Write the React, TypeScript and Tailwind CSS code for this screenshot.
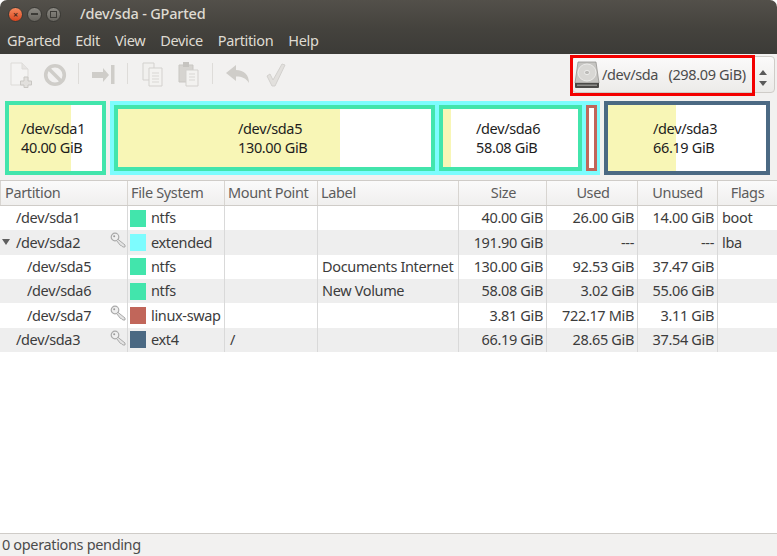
import React from "react";

const font = { };
const GREEN = "bg-[#42e5ac]";

function Key() {
  return (
    <svg width="17" height="17" viewBox="0 0 17 17" className="shrink-0">
      <circle cx="5" cy="5" r="3.8" fill="#efefef" stroke="#a9a9a9" strokeWidth="1.2" />
      <circle cx="4.2" cy="4.2" r="1" fill="#9a9a9a" />
      <path d="M7.8 7.2 L15 13 L15 15 L12.8 15 L11.5 13.6 L10.4 13.4 L6.6 8.6 Z" fill="#e4e4e4" stroke="#a9a9a9" strokeWidth="1" />
    </svg>
  );
}

function Toolbar() {
  const c = "#cfcdc9";
  return (
    <div className="h-[47px] bg-[#f2f1f0] flex items-start pl-[10px] relative">
      <svg width="22" height="26" viewBox="0 0 22 26" className="mt-[8px]">
        <path d="M1 1 H12 L18 7 V23 H1 Z" fill="#f4f3f2" stroke="#dddbd8" />
        <path d="M12 1 V7 H18" fill="#e6e4e2" stroke="#dddbd8" />
        <path d="M14 15 H18 V19 H21.5 V23 H18 V25.5 H14 V23 H10.5 V19 H14 Z" fill="#e2e0dd" stroke="#c9c7c3" />
      </svg>
      <svg width="24" height="24" viewBox="0 0 24 24" className="ml-[11px] mt-[9px]">
        <circle cx="12" cy="12" r="9.3" fill="none" stroke={c} strokeWidth="3.6" />
        <path d="M5.5 5.5 L18.5 18.5" stroke={c} strokeWidth="3.6" />
      </svg>
      <div className="w-px h-[21px] bg-[#dedcd9] ml-[11px] mt-[9px]" />
      <svg width="24" height="22" viewBox="0 0 24 22" className="ml-[13px] mt-[10px]">
        <path d="M0 8 H11 V4 L17 11 L11 18 V14 H0 Z" fill={c} />
        <path d="M19 1 H22.5 V20 H19 Z" fill={c} />
      </svg>
      <div className="w-px h-[21px] bg-[#dedcd9] ml-[11px] mt-[9px]" />
      <svg width="22" height="25" viewBox="0 0 22 25" className="ml-[14px] mt-[8px]">
        <path d="M1 1 H12 V18 H1 Z" fill="#f1f0ee" stroke="#d3d1ce" />
        <path d="M7 6 H20 V24 H7 Z" fill="#f3f2f0" stroke="#d3d1ce" />
        <path d="M10 11 H17 M10 14 H17 M10 17 H17 M10 20 H17" stroke="#d9d7d4" />
      </svg>
      <svg width="22" height="26" viewBox="0 0 22 26" className="ml-[14px] mt-[7px]">
        <path d="M1 4 H15 V21 H1 Z" fill="#d6d4d0" stroke="#c9c7c3" />
        <path d="M5 1 H11 V6 H5 Z" fill="#c6c4c0" />
        <path d="M8 9 H20 V25 H8 Z" fill="#f3f2f0" stroke="#d3d1ce" />
        <path d="M11 13 H17 M11 16 H17 M11 19 H17" stroke="#d9d7d4" />
      </svg>
      <div className="w-px h-[21px] bg-[#dedcd9] ml-[12px] mt-[9px]" />
      <svg width="24" height="20" viewBox="0 0 24 20" className="ml-[13px] mt-[11px]">
        <path d="M0 8 L10 0 V5 C18 5 23 10 23 18 C20 13 16 11.5 10 11.5 V16 Z" fill={c} />
      </svg>
      <svg width="20" height="24" viewBox="0 0 20 24" className="ml-[16px] mt-[9px]">
        <path d="M1 13 L4 11 L7 17 L16 1 L19 2 L9 23 H6 Z" fill="#e2e0dd" stroke="#d3d1ce" />
      </svg>

      <div className="absolute left-[572px] top-[2px] w-[203px] h-[37px] rounded-[4px] border border-[#cfccc8] bg-gradient-to-b from-[#fbfafa] to-[#ecebe9] flex items-center">
        <svg width="26" height="28" viewBox="0 0 26 28" className="ml-[1px] shrink-0">
          <path d="M4 1 H22 L25 22 H1 Z" fill="#c6c5c2" stroke="#8b8a87" strokeWidth="0.7" />
          <path d="M1 22 H25 V26 Q25 27 24 27 H2 Q1 27 1 26 Z" fill="#4b4a48" />
          <path d="M3 23.5 H23 V25 H3 Z" fill="#8f8e8b" />
          <ellipse cx="13" cy="11.5" rx="9" ry="8.5" fill="#d8d7d4" stroke="#ecebe9" />
          <ellipse cx="13" cy="11.5" rx="2.5" ry="2.2" fill="#bdbcb9" stroke="#eeeeec" />
        </svg>
        <span className="ml-[2px] text-[14.5px] text-[#4c4c4c] whitespace-pre font-['Noto_Sans',sans-serif] tracking-[-0.35px]">/dev/sda   (298.09 GiB)</span>
      </div>
      <svg width="10" height="18" viewBox="0 0 10 18" className="absolute left-[758px] top-[15px]">
        <path d="M1 6 L5 1 L9 6 Z" fill="#5a5a5a" />
        <path d="M1 12 L9 12 L5 17 Z" fill="#5a5a5a" />
      </svg>
      <div className="absolute left-[570px] top-[1px] w-[185px] h-[41px] border-[3px] border-[#f30000]" />
    </div>
  );
}

function Part({ w, color, used, l, label, size, h = "h-[74px]", bw = "border-[4px]" }: { w: string; color: string; used: string; l: string; label: string; size: string; h?: string; bw?: string }) {
  return (
    <div className={`${w} ${h} ${bw} ${color} relative bg-white shrink-0`}>
      <div className={`absolute left-0 top-0 bottom-0 ${used} bg-[#f8f6b6]`} />
      <div className={`relative h-full flex flex-col justify-center ${l} text-[14.5px] leading-[19px] text-[#1d1d1d] tracking-[-0.35px]`}>
        <div>{label}</div>
        <div>{size}</div>
      </div>
    </div>
  );
}

const cols = "grid grid-cols-[128px_97px_93px_141px_88px_91px_80px_59px]";

const rows = [
  { p: "/dev/sda1", ind: "pl-[16px]", key: false, c: "bg-[#42e5ac]", fs: "ntfs", m: "", lb: "", s: "40.00 GiB", u: "26.00 GiB", un: "14.00 GiB", f: "boot" },
  { p: "/dev/sda2", ind: "pl-[16px]", key: true, arrow: true, c: "bg-[#7dfcfe]", fs: "extended", m: "", lb: "", s: "191.90 GiB", u: "---", un: "---", f: "lba" },
  { p: "/dev/sda5", ind: "pl-[27px]", key: false, c: "bg-[#42e5ac]", fs: "ntfs", m: "", lb: "Documents Internet", s: "130.00 GiB", u: "92.53 GiB", un: "37.47 GiB", f: "" },
  { p: "/dev/sda6", ind: "pl-[27px]", key: false, c: "bg-[#42e5ac]", fs: "ntfs", m: "", lb: "New Volume", s: "58.08 GiB", u: "3.02 GiB", un: "55.06 GiB", f: "" },
  { p: "/dev/sda7", ind: "pl-[27px]", key: true, c: "bg-[#c1665a]", fs: "linux-swap", m: "", lb: "", s: "3.81 GiB", u: "722.17 MiB", un: "3.11 GiB", f: "" },
  { p: "/dev/sda3", ind: "pl-[16px]", key: true, c: "bg-[#4b6983]", fs: "ext4", m: "/", lb: "", s: "66.19 GiB", u: "28.65 GiB", un: "37.54 GiB", f: "" },
];

const headers: [string, string][] = [
  ["Partition", "pl-[4px]"],
  ["File System", "pl-[3px]"],
  ["Mount Point", "pl-[3px]"],
  ["Label", "pl-[3px]"],
  ["Size", "justify-center pl-[2px]"],
  ["Used", "justify-center pl-[2px]"],
  ["Unused", "justify-center"],
  ["Flags", "justify-center"],
];

export default function App() {
  return (
    <div className="w-[777px] h-[556px] bg-white flex flex-col overflow-hidden font-['Noto_Sans',sans-serif] text-[#3c3c3c]">
      <div className="bg-gradient-to-b from-[#53504a] via-[#45433e] to-[#3c3b37] rounded-t-[7px] shrink-0">
        <div className="h-[28px] flex items-center pl-[8px]">
          <div className="w-[15px] h-[15px] rounded-full bg-gradient-to-b from-[#f58a5e] to-[#d9441c] border border-[#3a3935] flex items-center justify-center text-[9px] leading-none font-bold text-[#4a2a1c] ml-[0px]">×</div>
          <div className="w-[15px] h-[15px] rounded-full bg-gradient-to-b from-[#8c8a84] to-[#66645e] border border-[#3a3935] ml-[4px] flex items-center justify-center"><div className="w-[7px] h-[2px] bg-[#3c3b37]" /></div>
          <div className="w-[15px] h-[15px] rounded-full bg-gradient-to-b from-[#8c8a84] to-[#66645e] border border-[#3a3935] ml-[4px] flex items-center justify-center"><div className="w-[7px] h-[7px] border border-[#3c3b37]" /></div>
          <span className="ml-[19px] text-[14.5px] font-medium text-[#dfdbd2] tracking-[-0.2px]">/dev/sda - GParted</span>
        </div>
        <div className="h-[26px] flex items-center pl-[7px] text-[14.5px] text-[#dfdbd2] tracking-[-0.35px]">
          <span>GParted</span>
          <span className="ml-[15px]">Edit</span>
          <span className="ml-[15px]">View</span>
          <span className="ml-[15px]">Device</span>
          <span className="ml-[15px]">Partition</span>
          <span className="ml-[15px]">Help</span>
        </div>
      </div>
      <Toolbar />
      <div className="bg-[#f2f1f0] h-[79px] shrink-0 flex pl-[5px] gap-[4px] items-start">
        <Part w="w-[101px]" color="border-[#42e5ac]" used="w-[62px]" l="pl-[12px]" label="/dev/sda1" size="40.00 GiB" />
        <div className="w-[490px] h-[74px] bg-[#7dfcfe] p-[4px] flex gap-[4px] shrink-0">
          <Part w="w-[321px]" h="h-[66px]" color="border-[#42e5ac]" used="w-[222px]" l="pl-[120px]" label="/dev/sda5" size="130.00 GiB" />
          <Part w="w-[143px]" h="h-[66px]" color="border-[#42e5ac]" used="w-[8px]" l="pl-[33px]" label="/dev/sda6" size="58.08 GiB" />
          <div className="w-[11px] h-[66px] border-[3px] border-[#c1665a] bg-white shrink-0" />
        </div>
        <Part w="w-[166px]" color="border-[#4b6983]" used="w-[68px]" l="pl-[45px]" label="/dev/sda3" size="66.19 GiB" />
      </div>
      <div className={`${cols} h-[26px] shrink-0 border-t border-b border-[#cfccc8] bg-gradient-to-b from-[#fafafa] to-[#f0efee] text-[14.5px] text-[#5c5c5c] tracking-[-0.35px]`}>
        {headers.map(([t, cl], i) => (
          <div key={t} className={`flex items-center ${cl} ${i < 7 ? "border-r border-[#d8d5d1]" : ""} ${i === 0 ? "border-l border-[#d8d5d1]" : ""}`}>{t}</div>
        ))}
      </div>
      <div className="flex-1 flex flex-col min-h-0 text-[14.5px] tracking-[-0.35px]">
        {rows.map((r, i) => (
          <div key={r.p} className={`${cols} h-[24.33px] shrink-0 ${i % 2 ? "bg-[#eeeeee]" : "bg-white"}`}>
            <div className={`relative flex items-center ${r.ind} border-r border-[#d9d9d9]`}>
              {r.arrow && (
                <svg width="8" height="8" viewBox="0 0 8 8" className="absolute left-[2px] top-[8px]">
                  <path d="M0 1 H8 L4 7 Z" fill="#5f5f5f" />
                </svg>
              )}
              <span>{r.p}</span>
              {r.key && <div className="absolute left-[110px] top-[2px]"><Key /></div>}
            </div>
            <div className="flex items-center pl-[2px] border-r border-[#d9d9d9]">
              <div className={`w-[16px] h-[17px] ${r.c} shrink-0`} />
              <span className="ml-[5px]">{r.fs}</span>
            </div>
            <div className="flex items-center pl-[5px] border-r border-[#d9d9d9]">{r.m}</div>
            <div className="flex items-center pl-[4px] whitespace-nowrap border-r border-[#d9d9d9]">{r.lb}</div>
            <div className="flex items-center justify-end pr-[3px] border-r border-[#d9d9d9]">{r.s}</div>
            <div className="flex items-center justify-end pr-[3px] border-r border-[#d9d9d9]">{r.u}</div>
            <div className="flex items-center justify-end pr-[3px] border-r border-[#d9d9d9]">{r.un}</div>
            <div className="flex items-center pl-[4px]">{r.f}</div>
          </div>
        ))}
      </div>
      <div className="h-[23px] shrink-0 bg-[#f2f1f0] border-t border-[#cfccc8] pl-[2px] flex items-center text-[14.5px] text-[#4c4c4c] tracking-[-0.35px]">0 operations pending</div>
    </div>
  );
}
